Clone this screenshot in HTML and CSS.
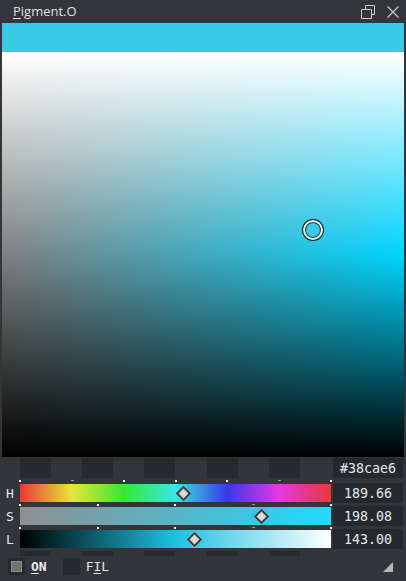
FILE: index.html
```html
<!DOCTYPE html>
<html>
<head>
<meta charset="utf-8">
<link rel="stylesheet" href="styles.css">
</head>
<body>
<div class="window">
  <div class="titlebar">
    <div class="title"><span class="ul">P</span>igment.O</div>
    <div class="winbtns">
      <svg class="ico" width="16" height="16" viewBox="0 0 16 16"><path d="M5.5 1.5h9v9h-3M1.5 5.5h10v9h-10z M5.5 5.5v-4" fill="none" stroke="#c9cbcd" stroke-width="1"/></svg>
      <svg class="ico" width="14" height="14" viewBox="0 0 14 14"><path d="M1.5 1.5l11 11M12.5 1.5l-11 11" stroke="#c9cbcd" stroke-width="1.2" fill="none"/></svg>
    </div>
  </div>
  <div class="swatch"></div>
  <div class="picker">
    <div class="cursor"></div>
  </div>
  <div class="controls">
    <div class="empty"></div>
    <div class="boxes">
      <span></span><span></span><span></span><span></span><span></span>
    </div>
    <div class="gap1"></div>
    <div class="valbox hex">#38cae6</div>

    <div class="empty"></div>
    <div class="ticks t7"><i></i><i class="g"></i><i></i><i></i><i></i><i class="g"></i><i></i></div>
    <div class="empty"></div><div class="empty"></div>

    <div class="lbl">H</div>
    <div class="bar hue"><b class="knob kh"></b></div>
    <div class="gap1"></div>
    <div class="valbox">189.66</div>

    <div class="empty"></div>
    <div class="ticks t5"><i></i><i></i><i></i><i class="g"></i><i></i></div>
    <div class="empty"></div><div class="empty"></div>

    <div class="lbl">S</div>
    <div class="bar sat"><b class="knob ks"></b></div>
    <div class="gap1"></div>
    <div class="valbox">198.08</div>

    <div class="empty"></div>
    <div class="ticks t5"><i></i><i></i><i></i><i class="g"></i><i></i></div>
    <div class="empty"></div><div class="empty"></div>

    <div class="lbl">L</div>
    <div class="bar lig"><b class="knob kl"></b></div>
    <div class="gap1"></div>
    <div class="valbox">143.00</div>

    <div class="empty"></div>
    <div class="boxes small">
      <span></span><span></span><span></span><span></span><span></span>
    </div>
    <div class="empty"></div><div class="empty"></div>
  </div>
  <div class="footer">
    <div class="check on"><span></span></div>
    <div class="flabel bold"><span class="ul">O</span>N</div>
    <div class="check off"></div>
    <div class="flabel">F<span class="ul">I</span>L</div>
    <div class="spacer"></div>
    <div class="grip"></div>
  </div>
</div>
</body>
</html>
```

FILE: styles.css
```css
* { box-sizing: border-box; }
html, body { margin: 0; padding: 0; }
body { background: #32363b; width: 406px; height: 581px; overflow: hidden; }
.window { width: 406px; height: 581px; background: #32363b; display: flex; flex-direction: column; }
.titlebar { height: 23px; display: flex; align-items: center; justify-content: space-between; padding-left: 13px; padding-right: 6px; background: #33373b; }
.title { font-family: "Open Sans", "Noto Sans", sans-serif; font-size: 13px; color: #dfe1e3; letter-spacing: 0; line-height: 23px; }
.ul { text-decoration: underline; text-underline-offset: 2px; }
.winbtns { display: flex; align-items: center; gap: 10px; }
.ico { display: block; }
.swatch { margin: 0 2px; height: 29px; background: #38cae6; }
.picker { margin: 0 2px; height: 405px; position: relative;
  background:
    linear-gradient(to bottom, #ffffff 0%, rgba(255,255,255,0) 50%, rgba(0,0,0,0) 50%, #000000 100%),
    linear-gradient(to right, hsl(190, 0%, 50%), hsl(190, 100%, 50%));
}
.cursor { position: absolute; left: 77.4%; top: 43.9%; width: 20px; height: 20px; margin: -10px 0 0 -10px; border-radius: 50%; background: #38cae6; border: 2px solid #f2f6f7; box-shadow: 0 0 0 1px #101417, inset 0 0 0 1px #1a2a30; }
.controls { display: grid; grid-template-columns: 20px 311px 2px 70px; grid-template-rows: 20px 5px 20px 3px 20px 3px 20px 8px; margin-top: 1px; }
.boxes { display: grid; grid-template-columns: repeat(5, 1fr); }
.boxes span { width: 31px; height: 20px; background: #26292d; }
.boxes.small { align-self: start; padding-top: 2px; }
.boxes.small span { height: 5px; }
.valbox { background: #25282c; font-family: "DejaVu Sans Mono", monospace; font-size: 13.3px; color: #e6e8ea; display: flex; align-items: center; justify-content: center; height: 20px; }
.hex { font-size: 13.3px; }
.lbl { font-family: "DejaVu Sans Mono", monospace; font-size: 13px; color: #e3e6ea; display: flex; align-items: center; padding-left: 6px; }
.bar { height: 18px; margin-top: 1px; position: relative; }
.hue { background: linear-gradient(to right,
  hsl(0,77.7%,56.1%), hsl(60,77.7%,56.1%) 16.667%, hsl(120,77.7%,56.1%) 33.333%,
  hsl(180,77.7%,56.1%) 50%, hsl(240,77.7%,56.1%) 66.667%, hsl(300,77.7%,56.1%) 83.333%, hsl(360,77.7%,56.1%)); }
.sat { background: linear-gradient(to right, hsl(190,0%,56.1%), hsl(190,100%,56.1%)); }
.lig { background: linear-gradient(to right, #000, hsl(190,77.7%,50%) 50%, #fff); }
.knob { position: absolute; top: 3.5px; width: 11px; height: 11px; margin-left: -5.5px; background: #d9d9d9; border: 2px solid #3b3c3e; transform: rotate(45deg); }
.kh { left: 52.7%; }
.ks { left: 77.7%; }
.kl { left: 56.1%; }
.ticks { display: flex; justify-content: space-between; align-items: center; height: 100%; margin-left: -1px; margin-right: -1px; }
.ticks i { display: block; width: 2px; height: 2px; background: #f0f0f0; }
.ticks i.g { width: 3px; height: 1px; background: #9a9da0; }
.footer { display: flex; align-items: center; height: 19px; padding-left: 8px; padding-right: 13px; }
.check { width: 17px; height: 17px; background: #26292d; display: flex; align-items: center; justify-content: center; }
.check.on span { width: 11px; height: 11px; background: #707274; border: 1px solid #8c8e90; }
.flabel { font-family: "DejaVu Sans Mono", monospace; font-size: 13px; color: #e6e8ea; margin-left: 6px; margin-right: 16px; }
.flabel.bold { font-weight: bold; }
.spacer { flex: 1; }
.grip { width: 0; height: 0; border-left: 10px solid transparent; border-bottom: 10px solid #b4b6b8; }
```
